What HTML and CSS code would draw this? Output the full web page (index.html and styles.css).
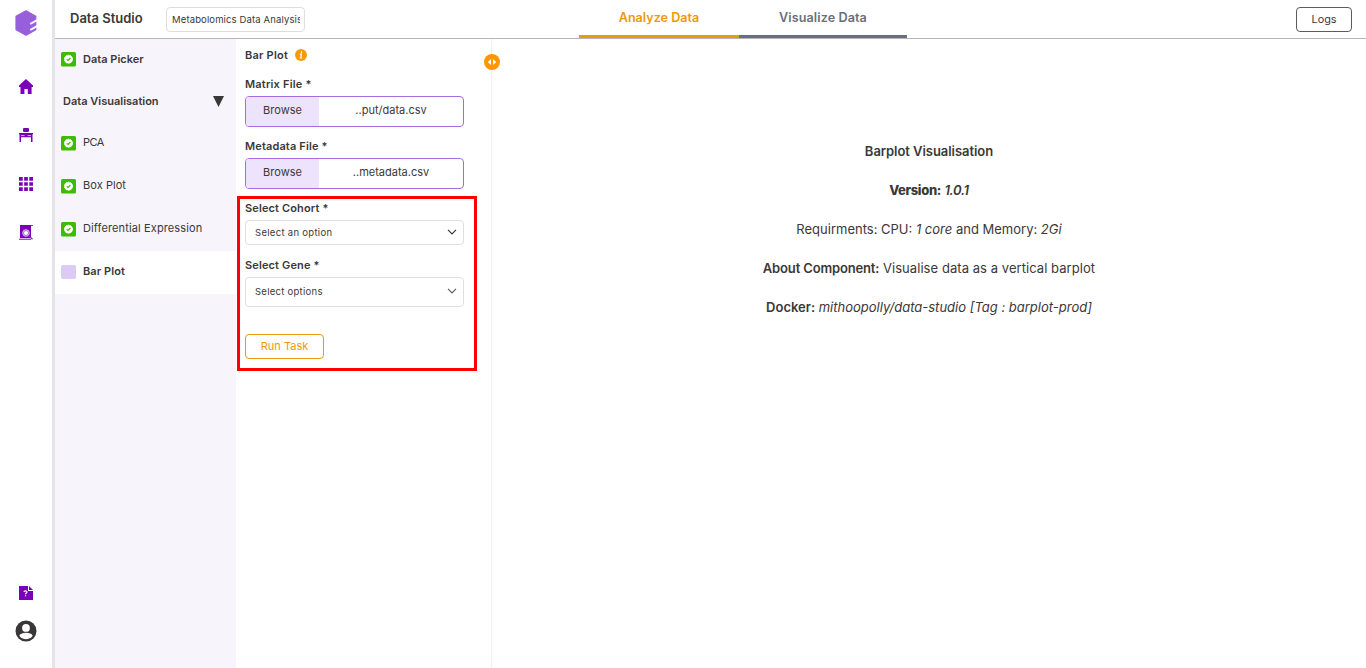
FILE: index.html
```html
<!DOCTYPE html>
<html lang="en">
<head>
<meta charset="utf-8">
<title>Data Studio</title>
<link rel="stylesheet" href="styles.css">
</head>
<body>
<svg class="defs" width="0" height="0">
  <symbol id="check" viewBox="0 0 15 15">
    <rect width="15" height="14.5" rx="1.5" fill="#3dbb05"/>
    <circle cx="7.5" cy="7.2" r="4" fill="#fff" stroke="#fff" stroke-width="1" stroke-dasharray="1.8 .7"/>
    <path d="M5.7 7.3 7 8.5 9.4 6" fill="none" stroke="#3dbb05" stroke-width="1.1"/>
  </symbol>
  <symbol id="chevron" viewBox="0 0 10 6"><path d="M1 .8 5 4.8 9 .8" fill="none" stroke="currentColor" stroke-width="1.2"/></symbol>
</svg>
<div class="app">
  <nav class="rail">
    <svg class="logo" width="22" height="26" viewBox="0 0 22 26"><path d="M11 .8 20.8 6.2V19.7L11 25.2 1 19.7V6.2Z" fill="#985fdd" stroke="#985fdd" stroke-width="1.2" stroke-linejoin="round"/><path d="M15.2 14 22.5 9.8M15.2 20 22.5 15.8" fill="none" stroke="#fff" stroke-width="2"/></svg>
    <svg class="home" width="14" height="15" viewBox="0 0 14 15"><path d="M7 0 14 6.6V8H12.6V15H8.8V10H5.4V15H1.5V8H0V6.6Z" fill="#7a00b8"/></svg>
    <svg class="desk" width="14" height="14" viewBox="0 0 14 14"><path d="M4 1Q4 0 5 0H9Q10 0 10 1V3Q10 4 9 4H5Q4 4 4 3ZM0 5H14V6.2H13.5V14H12V9.3H2V14H.5V6.2H0Z" fill="#7a00b8"/><path d="M2 7.6H5.5M8.5 7.6H12" stroke="#d6b1e9" stroke-width="1"/></svg>
    <svg class="grid" width="14" height="14" viewBox="0 0 14 14"><path d="M0 0H3.7V3.7H0ZM5.15 0H8.85V3.7H5.15ZM10.3 0H14V3.7H10.3ZM0 5.15H3.7V8.85H0ZM5.15 5.15H8.85V8.85H5.15ZM10.3 5.15H14V8.85H10.3ZM0 10.3H3.7V14H0ZM5.15 10.3H8.85V14H5.15ZM10.3 10.3H14V14H10.3Z" fill="#7a00b8"/></svg>
    <svg class="report" width="14" height="15" viewBox="0 0 14 15"><path d="M1 0H14V.8H12V13H1Z" fill="#7a00b8"/><path d="M0 14.2H12" stroke="#7a00b8"/><circle cx="7" cy="8" r="3.3" fill="#a34ed0" stroke="#ead5f5" stroke-width=".9"/><circle cx="7" cy="8" r="2.1" fill="#fff"/><path d="M9.5 10.5 13.5 14.2" stroke="#8d2cc2" stroke-width="1.3"/></svg>
    <svg class="help" width="14" height="14" viewBox="0 0 14 14"><path d="M0 0H9V5H14V14H0ZM10 0 14 4H10Z" fill="#7a00b8"/><path d="M5 6.1Q5 4.9 6.4 4.9 8 4.9 8 6.1 8 6.9 6.6 7.6V8.3M6.6 9.2V10.3" fill="none" stroke="#fff" stroke-width="1.2"/></svg>
    <svg class="user" width="22" height="22" viewBox="0 0 22 22"><circle cx="11" cy="11" r="10.5" fill="#393737"/><circle cx="11" cy="7.9" r="3.9" fill="#fff"/><path d="M4.3 15.7C6 11.9 16 11.9 17.7 15.7A8.2 8.2 0 0 1 4.3 15.7Z" fill="#fff"/></svg>
  </nav>
  <div class="main">
    <header class="header">
      <h1 class="title">Data Studio</h1>
      <div class="project"><span>Metabolomics Data Analysis</span></div>
      <div class="tabs"><div class="tab analyze"><span>Analyze Data</span></div><div class="tab visualize"><span>Visualize Data</span></div></div>
      <button class="logs">Logs</button>
    </header>
    <div class="body">
      <aside class="steps">
        <div class="step picker strong"><svg class="status"><use href="#check"/></svg><span>Data Picker</span></div>
        <div class="step group strong"><span>Data Visualisation</span><svg width="11" height="11" viewBox="0 0 11 11"><path d="M0 0H11L5.5 11Z" fill="#393737"/></svg></div>
        <div class="step"><svg class="status"><use href="#check"/></svg><span class="pca">PCA</span></div>
        <div class="step"><svg class="status"><use href="#check"/></svg><span class="box">Box Plot</span></div>
        <div class="step"><svg class="status"><use href="#check"/></svg><span class="diff">Differential Expression</span></div>
        <div class="step active strong"><i class="status pending"></i><span class="bar">Bar Plot</span></div>
      </aside>
      <section class="panel">
        <div class="heading"><span class="label barhead">Bar Plot</span><svg width="12" height="12" viewBox="0 0 12 12"><circle cx="6" cy="6" r="6" fill="#f79a06"/><path d="M6.5 2.3V3.9M4.9 5.2H6.4L5.8 9M4.7 9H7.2" stroke="#fff" stroke-width="1.2" fill="none"/></svg></div>
        <div class="label matrix">Matrix File *</div>
        <div class="file"><span class="browse">Browse</span><span class="name n1">..put/data.csv</span></div>
        <div class="label meta">Metadata File *</div>
        <div class="file"><span class="browse">Browse</span><span class="name n2">..metadata.csv</span></div>
        <div class="highlight">
          <div class="label cohort">Select Cohort *</div>
          <div class="select"><span class="s1">Select an option</span><svg width="10" height="6"><use href="#chevron"/></svg></div>
          <div class="label gene">Select Gene *</div>
          <div class="select tall"><span class="s2">Select options</span><svg width="10" height="6"><use href="#chevron"/></svg></div>
          <button class="run">Run Task</button>
        </div>
        <svg class="handle" width="16" height="16" viewBox="0 0 16 16"><circle cx="8" cy="8" r="8" fill="#ff9602"/><path d="M7 5V11L3.8 8ZM9 5V11L12.2 8Z" fill="#fff"/></svg>
      </section>
      <main class="info">
        <p class="l1"><b>Barplot Visualisation</b></p>
        <p class="l2"><b class="heavy">Version:</b> <b><em>1.0.1</em></b></p>
        <p class="l3">Requirments: CPU: <em>1 core</em> and Memory: <em>2Gi</em></p>
        <p class="l4"><b>About Component:</b> <span class="about">Visualise data as a vertical barplot</span></p>
        <p class="l5"><b>Docker:</b> <em>mithoopolly/data-studio [Tag : barplot-prod]</em></p>
      </main>
    </div>
  </div>
</div>
</body>
</html>
```
FILE: styles.css
```css
* { box-sizing: border-box; }
body { margin: 0; overflow: hidden; background: #fff; color: #3b3838; font-family: Inter, "Noto Sans", sans-serif; font-size: 11px; line-height: 14px; }
button { font: inherit; background: #fff; padding: 0; }
svg { display: block; flex: none; }
.defs { position: absolute; }
.app { display: flex; height: 668px; }
.rail { width: 55px; flex: none; border-right: 3px solid #e4e3e8; display: flex; flex-direction: column; align-items: center; padding: 10px 0 26px; }
.home { margin-top: 43px; }
.desk { margin-top: 34px; }
.grid { margin-top: 35px; }
.report { margin-top: 34px; }
.help { margin-top: auto; }
.user { margin-top: 20px; }
.main { flex: 1; min-width: 0; display: flex; flex-direction: column; }
.header { height: 39px; flex: none; border-bottom: 1px solid #b6b4b6; display: flex; align-items: flex-start; }
.title { margin: 10px 0 0 15px; width: 96px; font-size: 13px; line-height: 17px; font-weight: 600; white-space: nowrap; }
.project { width: 139px; height: 25px; margin-top: 7px; border: 1px solid #dedede; border-radius: 4px; padding: 5px 4px 0 5px; font-size: 9.5px; letter-spacing: .13px; }
.project span { display: block; overflow: hidden; white-space: nowrap; }
.tabs { display: flex; margin-left: 274px; font-size: 12.6px; font-weight: 600; text-align: center; }
.tab { height: 38px; padding-top: 11px; border-bottom: 3px solid; }
.analyze { width: 160px; color: #eb9a0a; }
.visualize { width: 168px; color: #68707a; letter-spacing: .1px; }
.logs { width: 56px; height: 25px; margin: 7px 14px 0 auto; border: 1px solid #5d5b5b; border-radius: 4px; color: #3b3838; font-size: 10.8px; }
.body { flex: 1; display: flex; min-height: 0; }
.steps { width: 181px; background: #f7f4fc; flex: none; }
.step { height: 43px; display: flex; align-items: center; gap: 7px; padding: 0 12px 4px 6px; white-space: nowrap; }
.picker { height: 41px; padding-bottom: 1px; }
.group { height: 42px; justify-content: space-between; padding-left: 8px; padding-right: 12px; padding-bottom: 0; }
.strong { font-weight: 600; }
.status { width: 15px; height: 15px; position: relative; top: 2px; }
.picker .status { top: 0; }
.pca { letter-spacing: -.5px; }
.box { letter-spacing: .06px; }
.diff { letter-spacing: .12px; }
.bar { letter-spacing: .1px; }
.pending { background: #dccbf4; border-radius: 2px; height: 14px; top: 1px; }
.active { background: #fff; height: 43px; }
.panel { position: relative; width: 256px; flex: none; border-right: 1px solid #f1eff7; padding: 9px 0 0 9px; }
.label { font-weight: 600; white-space: nowrap; line-height: 14px; letter-spacing: .13px; }
.barhead { letter-spacing: .22px; }
.heading { display: flex; align-items: center; gap: 7px; margin-bottom: 15px; }
.matrix { letter-spacing: .18px; }
.file { width: 219px; height: 31px; margin: 5px 0 12px; display: flex; border: 1px solid #a66ce0; border-radius: 4px; line-height: 27px; text-align: center; overflow: hidden; }
.browse { width: 73px; background: #eee3fc; }
.name { flex: 1; }
.highlight { width: 240px; height: 175px; margin: -5px 0 0 -8px; border: 3px solid #f00; padding: 2px 10px 0 5px; }
.select { width: 219px; height: 25px; margin: 5px 0 13px; border: 1px solid #dfdfe1; border-radius: 4px; display: flex; align-items: center; justify-content: space-between; padding: 0 6px 0 9px; font-size: 9.5px; letter-spacing: .3px; }
.s2 { letter-spacing: .27px; }
.tall { height: 30px; margin-bottom: 27px; }
.tall svg { color: #625c6b; }
.select svg { margin-top: -2px; }
.run { display: block; width: 79px; height: 25px; border: 1px solid #eb9a0a; border-radius: 4px; color: #eb9a0a; font-size: 11px; padding-bottom: 1px; }
.handle { position: absolute; left: 248px; top: 15px; }
.info { flex: 1; padding: 103px 0 0; text-align: center; font-size: 13px; line-height: 19px; }
.info p { margin: 0 0 20px; white-space: nowrap; }
.info b { font-weight: 600; }
.l1 { letter-spacing: -.05px; }
.l2 { letter-spacing: -.32px; }
.l4 b { letter-spacing: -.15px; }
.about { letter-spacing: .06px; }
.info .heavy { font-weight: 800; }
```
